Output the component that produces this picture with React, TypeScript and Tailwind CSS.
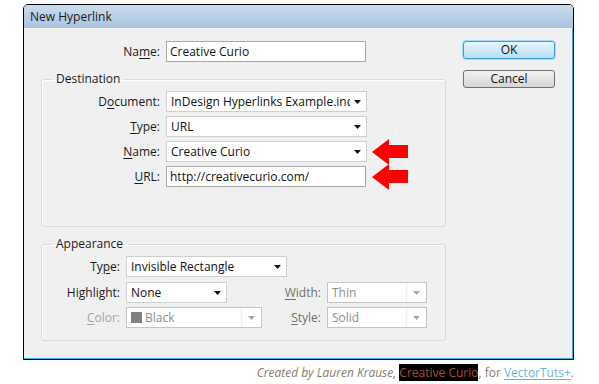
import React from 'react';

const font = { fontFamily: '"Open Sans", "Noto Sans", sans-serif' };

// small dropdown triangle
const Caret = ({ color = '#111' }: { color?: string }) => (
  <svg width="7" height="4" viewBox="0 0 7 4" className="shrink-0">
    <polygon points="0,0 7,0 3.5,4" fill={color} />
  </svg>
);

// red annotation arrow pointing left
const RedArrow = () => (
  <svg width="37" height="26" viewBox="0 0 37 26" className="ml-[5px] -my-[3px] shrink-0">
    <polygon points="0,13 17,0 17,6 36,6 36,19 17,19 17,26" fill="#ff0000" />
  </svg>
);

const Select = ({ value, w, disabled = false, swatch = false }: { value: string; w: string; disabled?: boolean; swatch?: boolean }) => (
  <div className={`${w} h-[21px] flex items-center bg-white border ${disabled ? 'border-[#c4c4c4]' : 'border-[#d0d0d0]'}`}>
    <div className={`flex-1 min-w-0 flex items-center gap-[3px] pl-[4px] overflow-hidden whitespace-nowrap ${disabled ? 'text-[#8d8d8d]' : 'text-[#111]'}`}>
      {swatch && <span className="w-[11px] h-[11px] bg-[#808080] shrink-0" />}
      <span>{value}</span>
    </div>
    {disabled ? (
      <div className="w-[20px] h-full border-l border-[#ececec] flex items-center justify-center">
        <Caret color="#a5a5a5" />
      </div>
    ) : (
      <div className="w-[16px] shrink-0 flex items-center justify-center pr-[2px]">
        <Caret />
      </div>
    )}
  </div>
);

const Input = ({ value, w }: { value: string; w: string }) => (
  <div className={`${w} h-[21px] flex items-center bg-white border border-[#a9a9a9] pl-[3px] text-[#111] whitespace-nowrap overflow-hidden`}>{value}</div>
);

const Label = ({ w, children, muted }: { w: string; children: React.ReactNode; muted?: string }) => (
  <div className={`${w} shrink-0 text-right pr-[6px] whitespace-nowrap ${muted ?? 'text-[#1a1a1a]'}`}>{children}</div>
);

const u = (c: string) => <u className="underline-offset-[2px]">{c}</u>;

export default function App() {
  return (
    <div className="w-[599px] h-[384px] bg-white text-[12px] leading-[16px]" style={font}>
      <div className="pt-[4px] pl-[23px]">
        {/* dialog window */}
        <div className="w-[551px] h-[356px] border border-black rounded-t-[5px] overflow-hidden flex flex-col">
          <div className="h-[23px] shrink-0 bg-gradient-to-b from-[#cbdcef] to-[#a9c3df] flex items-center pl-[6px] text-[#1b1b1b]">
            New Hyperlink
          </div>
          <div className="flex-1 flex bg-[#f0f0f0] border-r border-b border-[#35b5e5]">
            {/* form column */}
            <div className="pl-[17px] pt-[13px]">
              <div className="flex items-center h-[21px]">
                <Label w="w-[125px]">Na{u('m')}e:</Label>
                <Input value="Creative Curio" w="w-[200px]" />
              </div>

              <fieldset className="mt-[9px] w-[405px] h-[156px] border border-[#d5dde3] rounded-[3px] shadow-[inset_1px_1px_0_#fff]">
                <legend className="ml-[10px] px-[4px] leading-[16px] text-[#1a1a1a]">Destination</legend>
                <div className="pt-[4px] flex flex-col gap-[4px]">
                  <div className="flex items-center h-[21px]">
                    <Label w="w-[124px]">D{u('o')}cument:</Label>
                    <Select value="InDesign Hyperlinks Example.indd" w="w-[201px]" />
                  </div>
                  <div className="flex items-center h-[21px]">
                    <Label w="w-[124px]">{u('T')}ype:</Label>
                    <Select value="URL" w="w-[201px]" />
                  </div>
                  <div className="flex items-center h-[21px]">
                    <Label w="w-[124px]">{u('N')}ame:</Label>
                    <Select value="Creative Curio" w="w-[201px]" />
                    <RedArrow />
                  </div>
                  <div className="flex items-center h-[21px]">
                    <Label w="w-[124px]">{u('U')}RL:</Label>
                    <Input value="http://creativecurio.com/" w="w-[200px]" />
                    <span className="ml-[1px]" />
                    <RedArrow />
                  </div>
                </div>
              </fieldset>

              <fieldset className="mt-[9px] w-[405px] h-[105px] border border-[#d5dde3] rounded-[3px] shadow-[inset_1px_1px_0_#fff]">
                <legend className="ml-[10px] px-[4px] leading-[16px] text-[#1a1a1a]">Appearance</legend>
                <div className="pt-[4px] flex flex-col">
                  <div className="flex items-center h-[21px]">
                    <Label w="w-[84px]">Ty{u('p')}e:</Label>
                    <Select value="Invisible Rectangle" w="w-[161px]" />
                  </div>
                  <div className="flex items-center h-[21px] mt-[5px]">
                    <Label w="w-[84px]">Hi{u('g')}hlight:</Label>
                    <Select value="None" w="w-[101px]" />
                    <Label w="w-[100px]" muted="text-[#707070]">{u('W')}idth:</Label>
                    <Select value="Thin" w="w-[100px]" disabled />
                  </div>
                  <div className="flex items-center h-[21px] mt-[4px]">
                    <Label w="w-[84px]" muted="text-[#a3a3a3]">{u('C')}olor:</Label>
                    <Select value="Black" w="w-[136px]" disabled swatch />
                    <Label w="w-[65px]" muted="text-[#707070]">{u('S')}tyle:</Label>
                    <Select value="Solid" w="w-[100px]" disabled />
                  </div>
                </div>
              </fieldset>
            </div>

            {/* buttons column */}
            <div className="ml-[17px] pt-[13px] flex flex-col">
              <button className="w-[92px] h-[18px] rounded-[3px] border border-[#3c9fd8] bg-gradient-to-b from-[#e8f5fc] to-[#b9def4] shadow-[0_0_0_1px_#a6dcf5] text-[#111] leading-[14px]">
                OK
              </button>
              <button className="mt-[11px] w-[92px] h-[18px] rounded-[3px] border border-[#707070] bg-gradient-to-b from-[#f2f2f2] to-[#d6d6d6] text-[#111] leading-[14px]">
                Cancel
              </button>
            </div>
          </div>
        </div>

        {/* caption */}
        <div className="mt-[5px] w-[551px] text-right text-[#8a7b6c] text-[12px] leading-[16px]">
          <i>Created by Lauren Krause, </i>
          <span className="bg-black text-[#a0522d]">Creative Curio</span>
          <span>, for </span>
          <span className="text-[#6cb4db] underline underline-offset-[2px]">VectorTuts+</span>
          <span>.</span>
        </div>
      </div>
    </div>
  );
}
